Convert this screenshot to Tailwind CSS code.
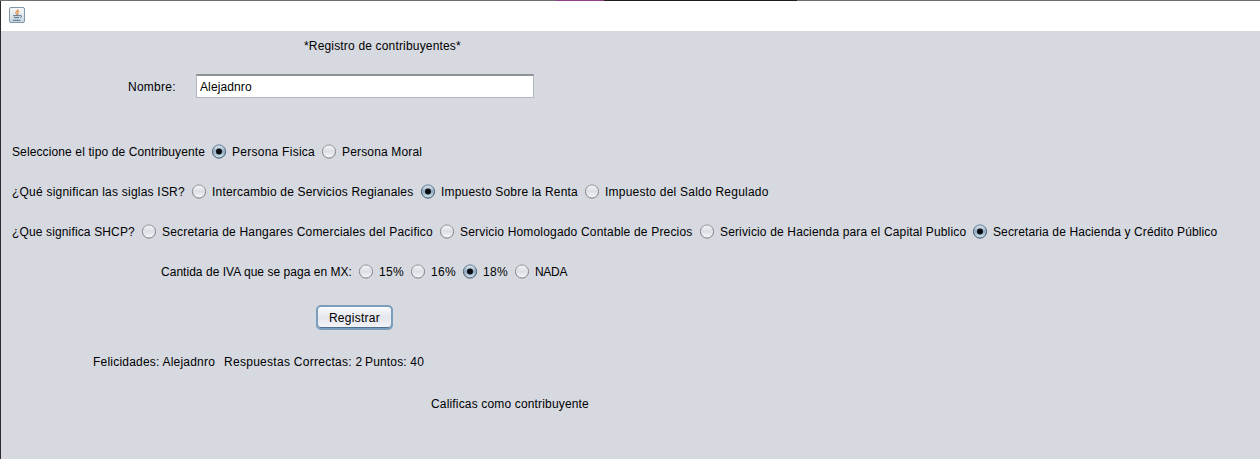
<!DOCTYPE html>
<html lang="es">
<head>
<meta charset="utf-8">
<title>Registro de contribuyentes</title>
<script src="https://cdn.jsdelivr.net/npm/@tailwindcss/browser@4"></script>
</head>
<body class="h-[459px] w-[1260px] overflow-hidden bg-[#d6d9e0] font-['Liberation_Sans',Arial,sans-serif] text-[12px] leading-4 text-black">
<svg class="absolute size-0">
  <defs>
    <linearGradient id="g0" x1="0" y1="0" x2="0" y2="1"><stop offset="0" stop-color="#f4f5f7"/><stop offset=".5" stop-color="#dddfe4"/><stop offset="1" stop-color="#f8f8fa"/></linearGradient>
    <linearGradient id="g1" x1="0" y1="0" x2="0" y2="1"><stop offset="0" stop-color="#e4edf4"/><stop offset=".5" stop-color="#91a9bd"/><stop offset="1" stop-color="#d6e8f5"/></linearGradient>
    <linearGradient id="s0" x1="0" y1="0" x2="0" y2="1"><stop offset="0" stop-color="#94979d"/><stop offset="1" stop-color="#75787d"/></linearGradient>
    <linearGradient id="s1" x1="0" y1="0" x2="0" y2="1"><stop offset="0" stop-color="#5f7c96"/><stop offset="1" stop-color="#32485c"/></linearGradient>
    <symbol id="off" viewBox="0 0 16 16"><circle cx="8" cy="7.500" r="6.600" fill="url(#g0)" stroke="url(#s0)"/></symbol>
    <symbol id="on" viewBox="0 0 16 16"><circle cx="8" cy="7.500" r="6.600" fill="url(#g1)" stroke="url(#s1)"/><circle cx="8" cy="7.500" r="3" fill="#090d12"/></symbol>
  </defs>
</svg>
<div class="flex h-px bg-[#706f70]"><i class="ml-[555px] w-[49px] bg-[#91408a]"></i><i class="w-[193px] bg-[#1d1b1e]"></i></div>
<div class="h-[458px] border-l border-[#2b2a2f]">
  <header class="flex h-[30px] bg-white pt-[6px] pl-2">
    <svg class="size-4" viewBox="0 0 16 16">
      <defs><linearGradient id="j" x1="0" y1="0" x2="0" y2="1"><stop offset="0" stop-color="#f8fafb"/><stop offset="1" stop-color="#cbd6df"/></linearGradient></defs>
      <rect x=".5" y=".5" width="15" height="15" rx="1.5" fill="url(#j)" stroke="#7f97aa"/>
      <path d="M8.800 2.200c.8 1.700-2.700 2.300-1.900 4 .2.700.8 1.100.8 1.800M10.200 4c-1.400.6-2.100 1.300-1.300 2.200.5.700.2 1.200-.5 1.800" fill="none" stroke="#e58b45" stroke-width="1.100"/>
      <path d="M4 8.700h6.700M5 10.700h5M3.700 13.300h7.600M10.700 8.600c2.700-.6 2.300 1.800.2 2.200" fill="none" stroke="#4c718f"/>
    </svg>
  </header>
  <main class="flex flex-col whitespace-nowrap">
    <h1 class="mt-[7px] ml-[303px] h-4 tracking-[0.17px]">*Registro de contribuyentes*</h1>
    <div class="mt-[20px] ml-[127px] flex h-6 items-center">
      <label class="w-[68px] pt-[2px] tracking-[0.26px]">Nombre:</label>
      <div class="flex h-6 w-[338px] items-center border border-t-2 border-[#b3b6bc] border-t-[#8f9298] bg-white pl-[3px] tracking-[0.12px]">Alejadnro</div>
    </div>
    <div class="mt-[46px] ml-[11px] flex h-4 items-center">
      <span class="w-[199px] tracking-[0.12px]">Seleccione el tipo de Contribuyente</span>
      <label class="flex w-[110px] items-center gap-[5px] tracking-[0.26px]"><svg class="size-4"><use href="#on"/></svg>Persona Fisica</label>
      <label class="flex items-center gap-[5px] tracking-[0.16px]"><svg class="size-4"><use href="#off"/></svg>Persona Moral</label>
    </div>
    <div class="mt-6 ml-[11px] flex h-4 items-center">
      <span class="w-[179px] tracking-[0.22px]">¿Qué significan las siglas ISR?</span>
      <label class="flex w-[229px] items-center gap-[5px] tracking-[0.19px]"><svg class="size-4"><use href="#off"/></svg>Intercambio de Servicios Regianales</label>
      <label class="flex w-[164px] items-center gap-[5px] tracking-[0.18px]"><svg class="size-4"><use href="#on"/></svg>Impuesto Sobre la Renta</label>
      <label class="flex items-center gap-[5px] tracking-[0.23px]"><svg class="size-4"><use href="#off"/></svg>Impuesto del Saldo Regulado</label>
    </div>
    <div class="mt-6 ml-[11px] flex h-4 items-center">
      <span class="w-[129px] tracking-[0.14px]">¿Que significa SHCP?</span>
      <label class="flex w-[298px] items-center gap-[5px] tracking-[0.2px]"><svg class="size-4"><use href="#off"/></svg>Secretaria de Hangares Comerciales del Pacifico</label>
      <label class="flex w-[260px] items-center gap-[5px] tracking-[0.18px]"><svg class="size-4"><use href="#off"/></svg>Servicio Homologado Contable de Precios</label>
      <label class="flex w-[273px] items-center gap-[5px] tracking-[0.15px]"><svg class="size-4"><use href="#off"/></svg>Serivicio de Hacienda para el Capital Publico</label>
      <label class="flex items-center gap-[5px] tracking-[0.12px]"><svg class="size-4"><use href="#on"/></svg>Secretaria de Hacienda y Crédito Público</label>
    </div>
    <div class="mt-6 ml-[160px] flex h-4 items-center">
      <span class="w-[197px] tracking-[0.03px]">Cantida de IVA que se paga en MX:</span>
      <label class="flex w-[52px] items-center gap-[5px] tracking-[0.3px]"><svg class="size-4"><use href="#off"/></svg>15%</label>
      <label class="flex w-[52px] items-center gap-[5px] tracking-[0.3px]"><svg class="size-4"><use href="#off"/></svg>16%</label>
      <label class="flex w-[52px] items-center gap-[5px] tracking-[0.3px]"><svg class="size-4"><use href="#on"/></svg>18%</label>
      <label class="flex items-center gap-[5px] tracking-[-0.3px]"><svg class="size-4"><use href="#off"/></svg>NADA</label>
    </div>
    <button class="mt-[25px] ml-[315px] h-[25px] w-[77px] rounded-[5px] border-2 border-[#7b9ebd] bg-linear-to-b from-[#fafbfc] via-[#e3e6ec] to-[#f4f6fa] leading-[22px] tracking-[0.28px] shadow-[inset_0_-1px_0_#52708d]">Registrar</button>
    <div class="mt-[24px] ml-[92px] flex h-4"><span class="w-[131px] tracking-[0.21px]">Felicidades: Alejadnro</span><span class="w-[141px] tracking-[0.28px]">Respuestas Correctas: 2</span><span class="tracking-[0.16px]">Puntos: 40</span></div>
    <p class="mt-[26px] ml-[430px] tracking-[0.16px]">Calificas como contribuyente</p>
  </main>
</div>
</body>
</html>
